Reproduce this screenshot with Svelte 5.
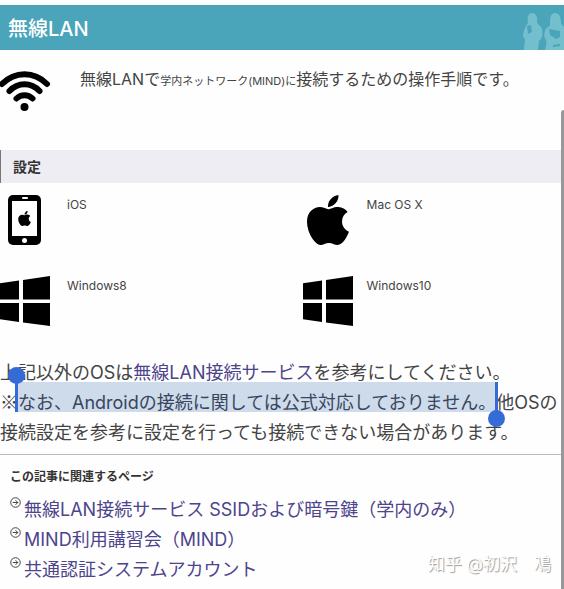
<script>
  const apple =
    'M318.7 268.7c-.2-36.7 16.4-64.4 50-84.8-18.8-26.9-47.2-41.7-84.7-44.6-35.5-2.8-74.3 20.7-88.5 20.7-15 0-49.4-19.7-76.4-19.7C63.3 141.2 4 184.8 4 273.5q0 39.3 14.4 81.2c12.8 36.7 59 126.7 107.2 125.2 25.2-.6 43-17.9 75.8-17.9 31.8 0 48.3 17.9 76.4 17.9 48.6-.7 90.4-82.5 102.6-119.3-65.2-30.7-61.7-90-61.7-91.9zm-56.6-164.2c27.3-32.4 24.8-61.9 24-72.5-24.1 1.4-52 16.4-67.9 34.9-17.5 19.8-27.8 44.3-25.6 71.9 26.1 2 49.9-11.4 69.5-34.3z';

  const systems = [
    { name: 'iOS', icon: 'phone' },
    { name: 'Mac OS X', icon: 'apple' },
    { name: 'Windows8', icon: 'windows' },
    { name: 'Windows10', icon: 'windows' }
  ];

  const related = [
    '無線LAN接続サービス SSIDおよび暗号鍵（学内のみ）',
    'MIND利用講習会（MIND）',
    '共通認証システムアカウント'
  ];
</script>

<div class="page">
  <header>
    <h1>無線LAN</h1>
    <svg class="people" viewBox="0 0 42 38" aria-hidden="true">
      <path d="M10 1c4 0 6 4 5 9 0 3 4 3 5 7 1 5 0 10-3 12l-1 9H2c0-5 1-8 1-11-3-2-2-5-1-8 1-4 3-7 4-8-1-5 0-10 4-10z" />
      <path d="M33 1c4 0 6 4 6 10 0 2 3 3 3 4v23H23c1-4 2-7 1-10-3-3-2-13 4-14 0-7 0-13 5-13z" />
      <g class="items">
        <path d="m5 14 4-1 1 7-4 2z" />
        <path d="m27 17 11 2v6l-4 2-6-4z" />
        <path d="m31 33 7-1v2l-7 1z" />
      </g>
    </svg>
  </header>

  <main>
    <section class="intro">
      <svg class="icon" viewBox="0 0 50 50" aria-hidden="true">
        <g fill="none" stroke="#000" stroke-width="6" stroke-linecap="round">
          <path d="M2 18C15 5 34 5 47 18" />
          <path d="M9.500 25C18 16 31 16 39.500 25" />
          <path d="M16.500 32.500C21 28 28 28 32.500 32.500" />
        </g>
        <circle cx="24.500" cy="41" r="4" />
      </svg>
      <p>無線LANで<small>学内ネットワーク(MIND)に</small>接続するための操作手順です。</p>
    </section>

    <h2>設定</h2>

    <ul class="systems">
      {#each systems as system}
        <li>
          {#if system.icon === 'phone'}
            <svg class="icon" viewBox="0 0 50 50" aria-hidden="true">
              <rect x="8" y="0" width="33" height="50" rx="5" />
              <rect x="12" y="6" width="25" height="35" fill="#fff" />
              <rect x="22" y="2" width="6" height="2" rx="1" fill="#fff" />
              <circle cx="24.500" cy="45.500" r="2.500" fill="#fff" />
              <svg x="18" y="16" width="13" height="15" viewBox="4 32 377 448"><path d={apple} /></svg>
            </svg>
          {:else if system.icon === 'apple'}
            <svg class="icon" viewBox="0 0 50 50" aria-hidden="true">
              <svg x="4" y="0" width="42" height="50" viewBox="4 32 377 448"><path d={apple} /></svg>
            </svg>
          {:else}
            <svg class="icon" viewBox="0 0 50 50" aria-hidden="true">
              <path d="M0 7.300 19 4.500V23.500H0zM23 4 50 0V23.500H23zM0 27H19V46L0 43.200zM23 27H50V50L23 46.500z" />
            </svg>
          {/if}
          <span>{system.name}</span>
        </li>
      {/each}
    </ul>

    <p class="notes">
      上記以外のOSは<a href="#service">無線LAN接続サービス</a>を参考にしてください。<br />
      <span class="kome">※</span><mark><i class="handle start"></i>なお、Androidの接続に関しては公式対応しておりません。<i class="handle end"></i></mark>他OSの<br />
      接続設定を参考に設定を行っても接続できない場合があります。
    </p>

    <section class="related">
      <h3>この記事に関連するページ</h3>
      <ul>
        {#each related as title}
          <li>
            <svg viewBox="0 0 12 12" aria-hidden="true">
              <circle cx="6" cy="6" r="5.200" />
              <path d="M3 6h5.500M6 3.500 8.500 6 6 8.500" />
            </svg>
            <a href="#related">{title}</a>
          </li>
        {/each}
      </ul>
    </section>
  </main>

  <div class="scrollbar"></div>
  <div class="watermark">知乎 @初沢　鳰</div>
</div>

<style>
  :global(body) {
    margin: 0;
    background: #fefefe;
  }

  .page {
    position: relative;
    box-sizing: border-box;
    min-height: 100vh;
    padding-top: 5px;
    overflow: hidden;
    color: #444;
    font-family: Inter, 'Noto Sans CJK JP', sans-serif;
    font-weight: 400;
  }

  h1, h2, h3, p, ul {
    margin: 0;
    padding: 0;
  }

  ul {
    list-style: none;
  }

  a {
    color: #4d448c;
    text-decoration: none;
  }

  header {
    display: flex;
    justify-content: space-between;
    align-items: flex-end;
    height: 45px;
    background: #4aa4ba;
  }

  h1 {
    padding-left: 8px;
    color: #fff;
    font-size: 20px;
    font-weight: 500;
    line-height: 42px;
  }

  .people {
    width: 42px;
    height: 38px;
    fill: #73bfce;
  }

  .items {
    fill: #4aa4ba;
  }

  .icon {
    flex: none;
    width: 50px;
    height: 50px;
    overflow: visible;
  }

  .intro {
    display: flex;
    gap: 30px;
    height: 84px;
    padding-top: 16px;
  }

  .intro p {
    font-size: 16px;
    line-height: 26px;
    white-space: nowrap;
  }

  .intro small {
    font-size: 11px;
  }

  h2 {
    padding-left: 12px;
    border-left: 1px solid #777;
    background: #eeedf3;
    color: #333;
    font-size: 14px;
    font-weight: 600;
    line-height: 33px;
  }

  .systems {
    display: grid;
    grid-template-columns: 54fr 46fr;
    row-gap: 31px;
    padding: 12px 0 32px;
  }

  .systems li {
    display: flex;
    gap: 17px;
    height: 50px;
  }

  .systems li:nth-child(even) {
    gap: 14px;
    margin-left: -2px;
  }

  .systems span {
    font-size: 12px;
    line-height: 20px;
  }

  .notes {
    position: relative;
    isolation: isolate;
    font-size: 18px;
    line-height: 30px;
    white-space: nowrap;
  }

  .kome {
    font-family: 'Noto Sans CJK JP', sans-serif;
    line-height: 1;
  }

  mark {
    position: relative;
    display: inline-block;
    background: none;
    color: #39455c;
  }

  mark::before {
    content: '';
    position: absolute;
    inset: -6px 0 6px;
    z-index: -1;
    background: #cddbeb;
  }

  .handle {
    position: absolute;
    top: -6px;
    bottom: 6px;
    width: 3px;
    background: #356bd6;
  }

  .handle::before {
    content: '';
    position: absolute;
    left: -7px;
    width: 17px;
    height: 17px;
    border-radius: 50%;
    background: #356bd6;
  }

  .start {
    left: -3px;
  }

  .start::before {
    top: -15px;
  }

  .end {
    right: -2px;
  }

  .end::before {
    bottom: -15px;
  }

  .related {
    margin-top: 6px;
    padding: 11px 10px 0;
    border-top: 1px solid #bbb;
  }

  h3 {
    margin-bottom: 7px;
    color: #333;
    font-size: 12px;
    font-weight: 600;
    line-height: 22px;
  }

  .related li {
    display: flex;
    gap: 3px;
    font-size: 18px;
    line-height: 30px;
  }

  .related svg {
    flex: none;
    width: 11px;
    height: 11px;
    margin-top: 2px;
    fill: none;
    stroke: #333;
    stroke-width: 1;
  }

  .scrollbar {
    position: absolute;
    top: 110px;
    right: 0;
    bottom: 0;
    width: 3px;
    border-radius: 3px 0 0 0;
    background: #98989b;
  }

  .watermark {
    position: absolute;
    right: 13px;
    bottom: 13px;
    color: #fff;
    font-size: 17px;
    line-height: 24px;
    text-shadow: 1px 1px 1px #999;
  }
</style>
